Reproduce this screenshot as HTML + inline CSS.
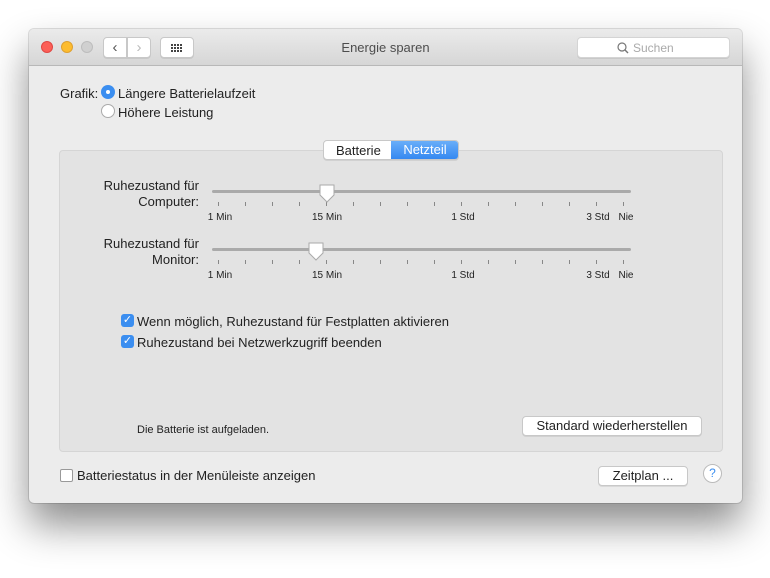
<!DOCTYPE html>
<html><head><meta charset="utf-8"><style>
*{box-sizing:border-box;margin:0;padding:0}
body{width:770px;height:578px;background:#fff;font-family:"Liberation Sans",sans-serif;font-size:13px;color:#222;position:relative;overflow:hidden}
.abs{position:absolute}
.win{left:29px;top:29px;width:713px;height:474px;background:#ececec;border-radius:5px;box-shadow:0 22px 40px rgba(0,0,0,.45),0 0 0 1px rgba(0,0,0,.12)}
.tb{left:0;top:0;width:713px;height:37px;background:linear-gradient(#ebebeb,#d6d6d6);border-bottom:1px solid #b8b8b8;border-radius:5px 5px 0 0}
.dot{width:12px;height:12px;border-radius:50%;top:12px}
.btn{background:#fff;border:1px solid #c8c8c8;border-radius:4px;box-shadow:0 1px 0 rgba(0,0,0,.08)}
.panel{left:30px;top:121px;width:664px;height:302px;background:#e3e3e3;border:1px solid #d5d5d5;border-radius:4px}
.t{font-size:10px;color:#222}
.tick{width:1px;height:4px;background:#888}
.track{height:3px;background:#aaa;border-radius:2px}
.cb{width:13px;height:13px;border-radius:3px;background:#3b8ef0;color:#fff;font-size:11px;line-height:13px;text-align:center}
</style></head><body>
<div class="abs win">
 <div class="abs tb">
  <div class="abs dot" style="left:12px;background:#fc5f57;border:1px solid #df4744"></div>
  <div class="abs dot" style="left:32px;background:#fdbc2e;border:1px solid #dea030"></div>
  <div class="abs dot" style="left:52px;background:#d0d0d0;border:1px solid #bdbdbd"></div>
  <div class="abs btn" style="left:74px;top:8px;width:24px;height:21px;border-radius:4px 0 0 4px;text-align:center;line-height:19px;font-size:15px;color:#555">&#8249;</div>
  <div class="abs btn" style="left:98px;top:8px;width:24px;height:21px;border-radius:0 4px 4px 0;text-align:center;line-height:19px;font-size:15px;color:#bbb">&#8250;</div>
  <div class="abs btn" style="left:131px;top:8px;width:34px;height:21px">
   <svg width="34" height="21" style="position:absolute;left:-1px;top:-1px"><g fill="#444"><rect x="11" y="7" width="2" height="2"/><rect x="14" y="7" width="2" height="2"/><rect x="17" y="7" width="2" height="2"/><rect x="20" y="7" width="2" height="2"/><rect x="11" y="10" width="2" height="2"/><rect x="14" y="10" width="2" height="2"/><rect x="17" y="10" width="2" height="2"/><rect x="20" y="10" width="2" height="2"/><rect x="11" y="13" width="2" height="2"/><rect x="14" y="13" width="2" height="2"/><rect x="17" y="13" width="2" height="2"/><rect x="20" y="13" width="2" height="2"/></g></svg></div>
  <div class="abs" style="left:0;width:713px;top:11px;text-align:center;color:#4d4d4d">Energie sparen</div>
  <div class="abs btn" style="left:548px;top:8px;width:153px;height:21px;border-color:#d4d4d4">
   <svg class="abs" style="left:39px;top:4px" width="12" height="12"><circle cx="5" cy="5" r="4" fill="none" stroke="#777" stroke-width="1.2"/><line x1="8" y1="8" x2="11" y2="11" stroke="#777" stroke-width="1.4"/></svg>
   <span class="abs" style="left:55px;top:3px;color:#aaa;font-size:12px">Suchen</span></div>
 </div>
 <span class="abs" style="left:31px;top:57px">Grafik:</span>
 <div class="abs" style="left:72px;top:56px;width:14px;height:14px;border-radius:50%;background:#3b8ef0"><div class="abs" style="left:5px;top:5px;width:4px;height:4px;border-radius:50%;background:#fff"></div></div>
 <span class="abs" style="left:89px;top:57px">Längere Batterielaufzeit</span>
 <div class="abs" style="left:72px;top:75px;width:14px;height:14px;border-radius:50%;background:#fff;border:1px solid #aaa"></div>
 <span class="abs" style="left:89px;top:76px">Höhere Leistung</span>
 <div class="abs panel"></div>
 <div class="abs btn" style="left:294px;top:111px;width:136px;height:20px;overflow:hidden">
  <span class="abs" style="left:12px;top:2px">Batterie</span>
  <div class="abs" style="left:67px;top:0;width:68px;height:20px;background:linear-gradient(#69aef9,#2f84f0);color:#fff;text-align:center;line-height:18px">Netzteil</div>
 </div>
 <div class="abs" style="left:40px;top:149px;width:130px;text-align:right;line-height:16px">Ruhezustand für<br>Computer:</div>
 <div class="abs" style="left:40px;top:207px;width:130px;text-align:right;line-height:16px">Ruhezustand für<br>Monitor:</div>
 <div id="s1" class="abs" style="left:0;top:0"></div>
 <div class="abs cb" style="left:92px;top:285px">✓</div>
 <span class="abs" style="left:108px;top:285px">Wenn möglich, Ruhezustand für Festplatten aktivieren</span>
 <div class="abs cb" style="left:92px;top:306px">✓</div>
 <span class="abs" style="left:108px;top:306px">Ruhezustand bei Netzwerkzugriff beenden</span>
 <span class="abs" style="left:108px;top:395px;font-size:11px">Die Batterie ist aufgeladen.</span>
 <div class="abs btn" style="left:493px;top:387px;width:180px;height:20px;text-align:center;line-height:18px">Standard wiederherstellen</div>
 <div class="abs" style="left:31px;top:440px;width:13px;height:13px;border:1px solid #999;border-radius:2px;background:#fff"></div>
 <span class="abs" style="left:48px;top:439px">Batteriestatus in der Menüleiste anzeigen</span>
 <div class="abs btn" style="left:569px;top:437px;width:90px;height:20px;text-align:center;line-height:18px">Zeitplan ...</div>
 <div class="abs" style="left:674px;top:435px;width:19px;height:19px;border-radius:50%;background:#fff;border:1px solid #bbb;color:#3b8ef0;text-align:center;line-height:17px;font-size:12px">?</div>
</div>
<svg class="abs" style="left:0;top:0" width="770" height="578">
<g id="sl"></g>
</svg>
<script></script>
<div class="abs" style="left:0;top:0">
 <!-- slider 1 -->
 <div class="abs track" style="left:212px;top:190px;width:419px"></div>
 <div class="abs track" style="left:212px;top:248px;width:419px"></div>
</div>
<svg class="abs" style="left:0;top:0" width="770" height="578">
 <g stroke="#888" stroke-width="1">
  <path d="M218.5 202v4M245.5 202v4M272.5 202v4M299.5 202v4M326.5 202v4M353.5 202v4M380.5 202v4M407.5 202v4M434.5 202v4M461.5 202v4M488.5 202v4M515.5 202v4M542.5 202v4M569.5 202v4M596.5 202v4M623.5 202v4"/>
  <path d="M218.5 260v4M245.5 260v4M272.5 260v4M299.5 260v4M326.5 260v4M353.5 260v4M380.5 260v4M407.5 260v4M434.5 260v4M461.5 260v4M488.5 260v4M515.5 260v4M542.5 260v4M569.5 260v4M596.5 260v4M623.5 260v4"/>
 </g>
 <path d="M320 185h14v10l-7 7l-7-7z" fill="#fff" stroke="#aaa"/>
 <path d="M309 243h14v10l-7 7l-7-7z" fill="#fff" stroke="#aaa"/>
 <g font-family="Liberation Sans" font-size="10" fill="#222" text-anchor="middle">
  <text x="220" y="220">1 Min</text><text x="327" y="220">15 Min</text><text x="463" y="220">1 Std</text><text x="598" y="220">3 Std</text><text x="626" y="220">Nie</text>
  <text x="220" y="278">1 Min</text><text x="327" y="278">15 Min</text><text x="463" y="278">1 Std</text><text x="598" y="278">3 Std</text><text x="626" y="278">Nie</text>
 </g>
</svg>
</body></html>
